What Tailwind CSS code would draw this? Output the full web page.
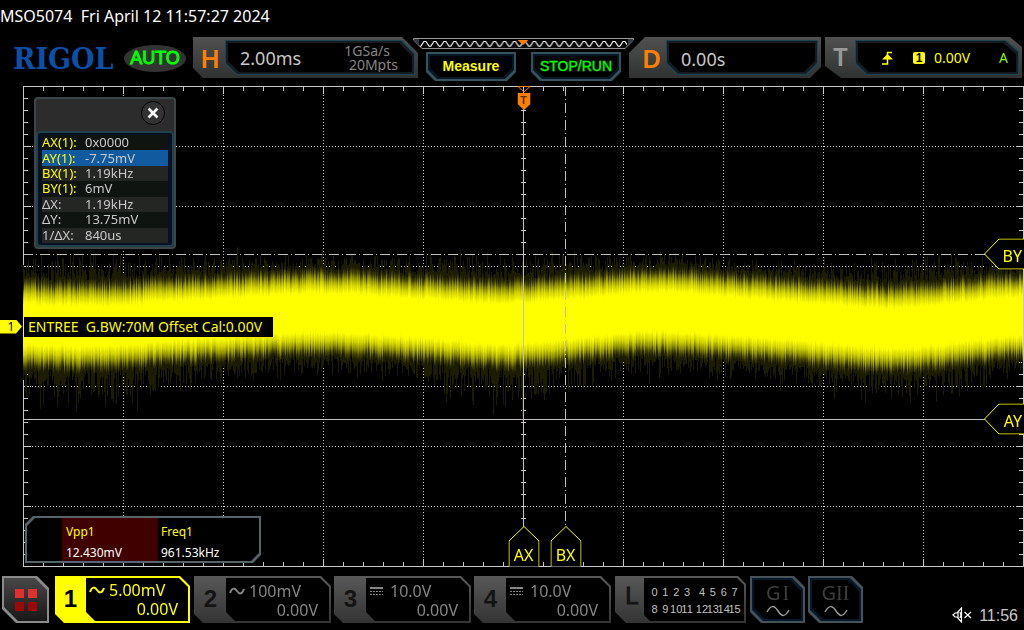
<!DOCTYPE html>
<html lang="en">
<head>
<meta charset="utf-8">
<meta name="viewport" content="width=device-width, initial-scale=1">
<title>MSO5074</title>
<script src="https://cdn.jsdelivr.net/npm/@tailwindcss/browser@4"></script>
</head>
<body class="flex h-screen flex-col overflow-hidden bg-black font-['Noto_Sans','Open_Sans',sans-serif] text-[#c8c8c8]">

<h1 class="h-8 shrink-0 text-base leading-8 whitespace-pre text-white">MSO5074  Fri April 12 11:57:27 2024</h1>

<header class="mt-[5px] grid h-[41px] shrink-0 grid-cols-[193px_225fr_211fr_192fr_4px_197fr] grid-rows-[41px] pr-[2px]">
  <div class="flex items-center gap-3 pt-[2px] pl-[13px]">
    <span class="w-[99px] font-['DejaVu_Serif_Condensed','DejaVu_Serif',serif] text-[30px] leading-none font-bold text-[#0a50a8]">RIGOL</span>
    <span class="h-[27px] w-[62px] shrink-0 rounded-[50%] bg-[#333] text-center font-['Liberation_Sans',sans-serif] text-lg leading-[27px] text-[#00ff00] [-webkit-text-stroke:1px_#00ff00]">AUTO</span>
  </div>

  <!-- Horizontal timebase -->
  <section class="flex bg-linear-to-b from-[#505050] to-[#303232] [clip-path:polygon(0_0,calc(100%-16px)_0,100%_16px,100%_100%,10px_100%,0_calc(100%-10px))]">
    <h2 class="w-8 shrink-0 pt-[2px] pl-[2px] text-center text-[26px] leading-[38px] font-semibold text-[#ff8000]">H</h2>
    <div class="my-[3px] mr-[3px] flex-1 bg-[#1f4452] p-px [clip-path:polygon(0_0,calc(100%-13px)_0,100%_13px,100%_100%,11px_100%,0_calc(100%-11px))]">
      <div class="h-full bg-[#151c22] p-[2px] [clip-path:inherit]">
        <div class="flex h-full items-center bg-black pr-[14px] pl-3 [clip-path:inherit]">
          <span class="text-lg">2.00ms</span>
          <span class="ml-auto text-right text-sm leading-[14px] text-[#858585]"><span class="mr-2">1GSa/s</span><br>20Mpts</span>
        </div>
      </div>
    </div>
  </section>

  <!-- Memory bar and run control -->
  <section class="flex flex-col">
    <div class="-mx-[5px] h-3">
      <svg class="h-full w-full" viewBox="0 0 222 12" preserveAspectRatio="none">
        <defs><pattern id="zig" width="10" height="12" patternUnits="userSpaceOnUse" x="7"><path d="M0 9.500 L1 9 L4 4.500 L6 4.500 L9 9 L10 9.500" fill="none" stroke="#fff" stroke-width="1.200"/></pattern></defs>
        <path d="M.5 1.500H221.500V3L213 11.500H9L.5 3Z" fill="#000" stroke="#999"/>
        <path d="M1 2H6V8L1 3ZM221 2H216V8L221 3Z" fill="#333a40"/>
        <rect x="7" y="0" width="208" height="12" fill="url(#zig)"/>
        <path d="M105 3H116L110.500 8Z" fill="#ff8000"/>
      </svg>
    </div>
    <div class="mt-[3px] flex justify-between px-2 font-['Liberation_Sans',sans-serif]">
      <button class="h-[29px] w-[90px] bg-[#35535c] p-[2px] [clip-path:polygon(0_0,100%_0,100%_calc(100%-9px),calc(100%-9px)_100%,9px_100%,0_calc(100%-9px))]"><span class="block h-full bg-[#081626] p-[2px] [clip-path:inherit]"><span class="block h-full bg-black text-sm leading-[21px] font-bold text-[#ffff00] [clip-path:inherit]">Measure</span></span></button>
      <button class="h-[29px] w-[90px] bg-[#35535c] p-[2px] [clip-path:polygon(0_0,100%_0,100%_calc(100%-9px),calc(100%-9px)_100%,9px_100%,0_calc(100%-9px))]"><span class="block h-full bg-[#081626] p-[2px] [clip-path:inherit]"><span class="flex h-full justify-center bg-black text-sm leading-[20px] whitespace-nowrap text-[#00ff00] [clip-path:inherit] [-webkit-text-stroke:0.4px_#00ff00]">STOP/RUN</span></span></button>
    </div>
  </section>

  <!-- Delay -->
  <section class="flex bg-linear-to-b from-[#505050] to-[#303232] [clip-path:polygon(16px_0,100%_0,100%_calc(100%-11px),calc(100%-11px)_100%,0_100%,0_16px)]">
    <h2 class="w-[37px] shrink-0 pt-[2px] pl-[8px] text-center text-[26px] leading-[38px] font-semibold text-[#ff8000]">D</h2>
    <div class="my-[3px] mr-[3px] flex-1 bg-[#1f4452] p-px [clip-path:polygon(0_0,100%_0,100%_calc(100%-11px),calc(100%-11px)_100%,11px_100%,0_calc(100%-11px))]">
      <div class="h-full bg-[#151c22] p-[2px] [clip-path:inherit]">
        <div class="flex h-full items-center bg-black pt-[2px] pl-3 text-lg [clip-path:inherit]">0.00s</div>
      </div>
    </div>
  </section>

  <!-- Trigger -->
  <section class="col-start-6 flex bg-linear-to-b from-[#505050] to-[#303232] [clip-path:polygon(0_0,calc(100%-12px)_0,100%_10px,100%_100%,16px_100%,0_calc(100%-12px))]">
    <h2 class="w-[30px] shrink-0 pl-[1px] text-center text-[26px] leading-[38px] font-semibold text-[#999]">T</h2>
    <div class="my-[3px] mr-[3px] flex-1 bg-[#1f4452] p-px [clip-path:polygon(0_0,calc(100%-13px)_0,100%_11px,100%_100%,11px_100%,0_calc(100%-11px))]">
      <div class="h-full bg-[#151c22] p-[2px] [clip-path:inherit]">
        <div class="flex h-full items-center bg-black pr-[8px] pl-[23px] text-sm text-[#ffff00] [clip-path:inherit]">
          <svg class="h-[14px] w-[13px]" viewBox="0 0 13 14"><path d="M1 13H6.500V1.500H11" fill="none" stroke="#ff0" stroke-width="1.500"/><path d="M1 8.500L6.500 3L12 8.500Z" fill="#ff0"/></svg>
          <span class="ml-[19px] h-3 w-3 rounded-xs bg-[#ffff00] text-center font-['Liberation_Sans',sans-serif] text-xs leading-3 font-bold text-black">1</span>
          <span class="ml-[9px]">0.00V</span>
          <span class="ml-auto text-[#8ff01c]">A</span>
        </div>
      </div>
    </div>
  </section>
</header>

<main class="relative mt-2 min-h-0 flex-1 pl-[23px]">
  <div id="plot" class="relative h-full w-full">
    <svg class="absolute inset-0 h-full w-full" viewBox="0 0 1001 481" preserveAspectRatio="none" fill="none" stroke="#c8c8c8" shape-rendering="crispEdges">
      <path d="M.5 .5H1000.500V480.500H.5Z"/>
      <g stroke-dasharray="1 2">
        <path d="M0 60.500H1001M0 120.500H1001M0 180.500H1001M0 240.500H1001M0 300.500H1001M0 360.500H1001M0 420.500H1001"/>
        <path d="M100.500 0V481M200.500 0V481M300.500 0V481M400.500 0V481M600.500 0V481M700.500 0V481M800.500 0V481M900.500 0V481"/>
      </g>
      <!-- minor and major ticks along the frame -->
      <path d="M0 2.500H1001M0 478.500H1001" stroke-width="5" stroke-dasharray="1 19"/>
      <path d="M0 4H1001M0 477H1001" stroke-width="8" stroke-dasharray="1 99"/>
      <path d="M2.500 0V481M998.500 0V481M500.500 0V481" stroke-width="5" stroke-dasharray="1 11"/>
      <path d="M4 0V481M997 0V481" stroke-width="8" stroke-dasharray="1 59"/>
    </svg>
    <canvas id="wave" width="1001" height="481" class="absolute inset-0 h-full w-full" role="img" aria-label="Channel 1 trace"></canvas>
    <svg class="absolute inset-0 h-full w-full" viewBox="0 0 1001 481" preserveAspectRatio="none" fill="none" stroke="#c0c0b8" shape-rendering="crispEdges">
      <path d="M500.500 0V442M0 333.500H962"/>
      <path d="M542.500 0V442M0 168.500H962" stroke-dasharray="10 3 1 3"/>
    </svg>

    <!-- Trigger position -->
    <div class="absolute top-0 left-[50%] -translate-x-1/2">
      <svg class="h-[25px] w-[13px]" viewBox="0 0 13 25"><path d="M.5 .5H12.500L6.500 6Z" fill="none" stroke="#ff8000"/><path d="M0 7H13V18L6.500 24L0 18Z" fill="#ff8000"/></svg>
      <span class="absolute inset-x-0 top-[8px] text-center font-['Liberation_Sans',sans-serif] text-[11px] leading-3 font-bold text-[#503000]">T</span>
    </div>

    <!-- Cursor handles -->
    <div class="absolute bottom-0 left-[50%] h-[41px] w-[31px] -translate-x-1/2 pt-[19px] text-center text-base leading-5 text-[#ffff00]">
      <svg class="absolute inset-0" width="31" height="41" viewBox="0 0 31 41"><path d="M.5 40.500V15L15.500 .5L30.500 15V40.500" fill="#000" stroke="#ff0"/></svg><span class="relative">AX</span>
    </div>
    <div class="absolute bottom-0 left-[54.200%] h-[41px] w-[31px] -translate-x-1/2 pt-[19px] text-center text-base leading-5 text-[#ffff00]">
      <svg class="absolute inset-0" width="31" height="41" viewBox="0 0 31 41"><path d="M.5 40.500V15L15.500 .5L30.500 15V40.500" fill="#000" stroke="#ff0"/></svg><span class="relative">BX</span>
    </div>
    <div class="absolute top-[35%] right-0 h-[31px] w-10 -translate-y-1/2 pr-[2px] text-right text-base leading-[34px] text-[#ffff00]">
      <svg class="absolute inset-0" width="40" height="31" viewBox="0 0 40 31"><path d="M40 .5H15L.5 15.500L15 30.500H40" fill="#000" stroke="#ff0"/></svg><span class="relative">BY</span>
    </div>
    <div class="absolute top-[69.300%] right-0 h-[31px] w-10 -translate-y-1/2 pr-[2px] text-right text-base leading-[34px] text-[#ffff00]">
      <svg class="absolute inset-0" width="40" height="31" viewBox="0 0 40 31"><path d="M40 .5H15L.5 15.500L15 30.500H40" fill="#000" stroke="#ff0"/></svg><span class="relative">AY</span>
    </div>

    <div class="absolute top-[50%] left-px min-w-[249px] -translate-y-1/2 bg-black px-1 text-sm leading-5 whitespace-pre text-[#ffff00]">ENTREE  G.BW:70M Offset Cal:0.00V</div>

    <!-- Cursor readout -->
    <section class="absolute top-[11px] left-[11px] w-[142px] rounded-[4px] border-2 border-[#3c4548] bg-[#2b2c2b]">
      <div class="flex h-8 justify-end pt-[2px] pr-[9px]">
        <button aria-label="Close" class="flex h-6 w-6 items-center justify-center rounded-full border border-black bg-[#333]"><svg class="h-3 w-3" viewBox="0 0 12 12"><path d="M1.500 1.500L10.500 10.500M10.500 1.500L1.500 10.500" stroke="#fff" stroke-width="2.500"/></svg></button>
      </div>
      <div class="rounded-[4px] border-2 border-[#23414c] bg-[#061222] px-1 py-[2px]">
        <table class="h-[108px] w-full border-collapse text-left text-[13px] leading-[15px]">
          <tbody>
            <tr class="bg-[#101411]"><th scope="row" class="w-[43px] p-0 font-normal whitespace-nowrap text-[#ffff00]">AX(1):</th><td class="p-0">0x0000</td></tr>
            <tr class="bg-[#115aa0]"><th scope="row" class="p-0 font-normal text-[#ffff00]">AY(1):</th><td class="p-0">-7.75mV</td></tr>
            <tr class="bg-[#242624]"><th scope="row" class="p-0 font-normal text-[#ffff00]">BX(1):</th><td class="p-0">1.19kHz</td></tr>
            <tr class="bg-[#101411]"><th scope="row" class="p-0 font-normal text-[#ffff00]">BY(1):</th><td class="p-0">6mV</td></tr>
            <tr class="bg-[#242624]"><th scope="row" class="p-0 font-normal">ΔX:</th><td class="p-0">1.19kHz</td></tr>
            <tr class="bg-[#101411]"><th scope="row" class="p-0 font-normal">ΔY:</th><td class="p-0">13.75mV</td></tr>
            <tr class="bg-[#242624]"><th scope="row" class="p-0 font-normal">1/ΔX:</th><td class="p-0">840us</td></tr>
          </tbody>
        </table>
      </div>
    </section>

    <!-- Measurement results -->
    <section class="absolute bottom-1 left-[2px] h-[47px] w-[236px] bg-[#56656a] p-[2px] [clip-path:polygon(8px_0,100%_0,100%_calc(100%-8px),calc(100%-8px)_100%,0_100%,0_8px)]">
      <dl class="flex h-full bg-black pl-[35px] text-xs leading-[21px] [clip-path:inherit]">
        <div class="w-24 bg-[#400000] pt-[3px] pl-1"><dt class="text-[#ffff00]">Vpp1</dt><dd class="text-white">12.430mV</dd></div>
        <div class="pt-[3px] pl-[3px]"><dt class="text-[#ffff00]">Freq1</dt><dd class="text-white">961.53kHz</dd></div>
      </dl>
    </section>
  </div>

  <!-- Channel 1 ground level -->
  <div class="absolute top-[50%] left-0 h-[14px] w-[22px] -translate-y-1/2 bg-[#ffff00] text-center text-xs leading-[14px] text-black [clip-path:polygon(0_0,16px_0,100%_50%,16px_100%,0_100%)]">1</div>
</main>

<footer class="mt-[9px] mb-[7px] grid h-[47px] shrink-0 grid-cols-[49px_137fr_137fr_137fr_137fr_133fr_55px_55px_154fr] gap-[3px] pr-1 pl-[2px]">
  <button aria-label="Menu" class="w-[47px] bg-[#8a8a8a] p-[2px] [clip-path:polygon(0_0,calc(100%-12px)_0,100%_12px,100%_100%,14px_100%,0_calc(100%-14px))]">
    <span class="flex h-full items-center justify-center bg-linear-to-b from-[#484848] to-[#181818] [clip-path:inherit]">
      <svg class="h-6 w-6" viewBox="0 0 24 24"><path d="M1 1H10V10H1ZM14 1H23V10H14Z" fill="#e03030"/><path d="M1 14H10V23H1ZM14 14H23V23H14Z" fill="#9c0808"/></svg>
    </span>
  </button>

  <button class="mr-px ml-px flex bg-[#ffff00] p-0 text-left text-base text-[#ffff00] [clip-path:polygon(0_0,calc(100%-10px)_0,100%_10px,100%_100%,9px_100%,0_calc(100%-9px))]">
    <span class="w-[31px] text-center font-['Liberation_Sans',sans-serif] text-2xl leading-[46px] font-bold text-black">1</span>
    <span class="mt-[2px] mr-[2px] mb-[2px] flex h-[43px] flex-1 flex-col justify-center bg-black pt-px leading-[19px] [clip-path:polygon(0_0,calc(100%-9px)_0,100%_9px,100%_100%,9px_100%,0_calc(100%-9px))]">
      <span class="flex items-center"><svg class="mr-1 mb-px ml-[3px] h-2 w-4" viewBox="0 0 16 8"><path d="M1 6C3 0 6 1 8 4S13 8 15 2" fill="none" stroke="currentColor" stroke-width="2"/></svg>5.00mV</span>
      <span class="pr-[10px] text-right">0.00V</span>
    </span>
  </button>

  <button class="flex bg-linear-to-b from-[#585858] to-[#343434] p-px text-left text-base text-[#858585] [clip-path:polygon(0_0,calc(100%-10px)_0,100%_10px,100%_100%,9px_100%,0_calc(100%-9px))]">
    <span class="w-[31px] text-center font-['Liberation_Sans',sans-serif] text-2xl leading-[44px] font-bold text-[#141414]">2</span>
    <span class="mt-px mr-px flex h-[43px] flex-1 flex-col justify-center bg-black pt-[2px] leading-[19px] [clip-path:polygon(0_0,calc(100%-9px)_0,100%_9px,100%_100%,9px_100%,0_calc(100%-9px))]">
      <span class="flex items-center"><svg class="mr-1 mb-px ml-[3px] h-2 w-4" viewBox="0 0 16 8"><path d="M1 6C3 0 6 1 8 4S13 8 15 2" fill="none" stroke="currentColor" stroke-width="2"/></svg>100mV</span>
      <span class="pr-[11px] text-right">0.00V</span>
    </span>
  </button>

  <button class="flex bg-linear-to-b from-[#585858] to-[#343434] p-px text-left text-base text-[#858585] [clip-path:polygon(0_0,calc(100%-10px)_0,100%_10px,100%_100%,9px_100%,0_calc(100%-9px))]">
    <span class="w-[31px] text-center font-['Liberation_Sans',sans-serif] text-2xl leading-[44px] font-bold text-[#141414]">3</span>
    <span class="mt-px mr-px flex h-[43px] flex-1 flex-col justify-center bg-black pt-[2px] leading-[19px] [clip-path:polygon(0_0,calc(100%-9px)_0,100%_9px,100%_100%,9px_100%,0_calc(100%-9px))]">
      <span class="flex items-center"><svg class="mr-[7px] ml-1 h-2 w-[13px]" viewBox="0 0 13 8" shape-rendering="crispEdges"><path d="M0 1H13" stroke="currentColor" stroke-width="2"/><path d="M0 4.500H13M0 7.500H13" stroke="currentColor" stroke-dasharray="2 1"/></svg>10.0V</span>
      <span class="pr-[11px] text-right">0.00V</span>
    </span>
  </button>

  <button class="flex bg-linear-to-b from-[#585858] to-[#343434] p-px text-left text-base text-[#858585] [clip-path:polygon(0_0,calc(100%-10px)_0,100%_10px,100%_100%,9px_100%,0_calc(100%-9px))]">
    <span class="w-[31px] text-center font-['Liberation_Sans',sans-serif] text-2xl leading-[44px] font-bold text-[#141414]">4</span>
    <span class="mt-px mr-px flex h-[43px] flex-1 flex-col justify-center bg-black pt-[2px] leading-[19px] [clip-path:polygon(0_0,calc(100%-9px)_0,100%_9px,100%_100%,9px_100%,0_calc(100%-9px))]">
      <span class="flex items-center"><svg class="mr-[7px] ml-1 h-2 w-[13px]" viewBox="0 0 13 8" shape-rendering="crispEdges"><path d="M0 1H13" stroke="currentColor" stroke-width="2"/><path d="M0 4.500H13M0 7.500H13" stroke="currentColor" stroke-dasharray="2 1"/></svg>10.0V</span>
      <span class="pr-[11px] text-right">0.00V</span>
    </span>
  </button>

  <!-- Logic analyser channels -->
  <button class="mr-px ml-px flex bg-linear-to-b from-[#585858] to-[#343434] p-px font-['Liberation_Sans',sans-serif] [clip-path:polygon(0_0,calc(100%-8px)_0,100%_8px,100%_100%,11px_100%,0_calc(100%-11px))]">
    <span class="w-[28px] pl-1 text-center text-2xl leading-[38px] text-[#141414] [-webkit-text-stroke:1px_#141414]">L</span>
    <span class="mt-px mr-px flex h-[43px] flex-1 flex-col justify-center gap-px bg-black pt-px pr-[4px] pl-[5px] text-[11px] leading-4 text-[#c0c0c0] [clip-path:polygon(0_0,calc(100%-7px)_0,100%_7px,100%_100%,6px_100%,0_calc(100%-6px))]">
      <span class="flex"><span class="grid flex-1 grid-cols-4"><i class="not-italic">0</i><i class="not-italic">1</i><i class="not-italic">2</i><i class="not-italic">3</i></span><span class="ml-1 grid flex-1 grid-cols-4"><i class="not-italic">4</i><i class="not-italic">5</i><i class="not-italic">6</i><i class="not-italic">7</i></span></span>
      <span class="flex"><span class="grid flex-1 grid-cols-4"><i class="not-italic">8</i><i class="not-italic">9</i><i class="flex justify-center not-italic">10</i><i class="flex justify-center not-italic">11</i></span><span class="ml-1 grid flex-1 grid-cols-4"><i class="flex justify-center not-italic">12</i><i class="flex justify-center not-italic">13</i><i class="flex justify-center not-italic">14</i><i class="flex justify-center not-italic">15</i></span></span>
    </span>
  </button>

  <button class="bg-[#465258] p-[2px] [clip-path:polygon(0_0,calc(100%-11px)_0,100%_11px,100%_100%,11px_100%,0_calc(100%-11px))]">
    <span class="block h-full bg-[#06182c] p-[2px] [clip-path:inherit]"><span class="flex h-full flex-col items-center bg-black pt-px text-[#3e3e3e] [clip-path:inherit]"><span class="text-xl leading-6">G<span class="pl-[2px] font-['Liberation_Serif',serif]">I</span></span><svg class="h-3 w-6" viewBox="0 0 24 12"><path d="M1 7C5 0 8 0 12 6S19 12 23 5" fill="none" stroke="#999" stroke-width="1.500"/></svg></span></span>
  </button>
  <button class="bg-[#465258] p-[2px] [clip-path:polygon(0_0,calc(100%-11px)_0,100%_11px,100%_100%,11px_100%,0_calc(100%-11px))]">
    <span class="block h-full bg-[#06182c] p-[2px] [clip-path:inherit]"><span class="flex h-full flex-col items-center bg-black pt-px text-[#3e3e3e] [clip-path:inherit]"><span class="text-xl leading-6">G<span class="font-['Liberation_Serif',serif]">II</span></span><svg class="h-3 w-6" viewBox="0 0 24 12"><path d="M1 7C5 0 8 0 12 6S19 12 23 5" fill="none" stroke="#999" stroke-width="1.500"/></svg></span></span>
  </button>

  <div class="flex items-end justify-end gap-[7px] pr-[2px] font-['Liberation_Sans',sans-serif] text-base leading-[15px]">
    <svg class="h-4 w-5" viewBox="0 0 20 16" fill="none" stroke="#fff" stroke-width="1.200"><path d="M1 8L3 6H5L9.500 1V15L5 10H3Z"/><path d="M6 5V11M8 5L9 8L8 11M12.500 5L19 11M19 5L12.500 11"/></svg>
    <time>11:56</time>
  </div>
</footer>

<script>
  // Noise band of channel 1, drawn one column at a time.
  const canvas = document.getElementById('wave');
  const ctx = canvas.getContext('2d');
  let seed = 7;
  const rnd = () => (seed = (seed * 16807) % 2147483647) / 2147483647;
  const mids = [[0, 238], [67, 240], [177, 233], [297, 227], [397, 232], [480, 238], [547, 233], [627, 226], [717, 231], [807, 238], [880, 242], [937, 236], [1001, 230]];
  const mid = x => {
    let i = 0;
    while (i < mids.length - 2 && x > mids[i + 1][0]) i++;
    const [x0, y0] = mids[i], [x1, y1] = mids[i + 1];
    const p = mids[Math.max(i - 1, 0)][1], n = mids[Math.min(i + 2, mids.length - 1)][1];
    const t = (x - x0) / (x1 - x0);
    return 0.5 * (2 * y0 + (y1 - p) * t + (2 * p - 5 * y0 + 4 * y1 - n) * t * t + (3 * y0 - p - 3 * y1 + n) * t * t * t);
  };
  const bump = (x, c, w) => Math.exp(-(((x - c) / w) ** 2));
  for (let x = 0; x < 1000; x++) {
    const m = mid(x);
    const burst = 0.5 + 0.6 * bump(x, 70, 90) + 0.65 * bump(x, 485, 75) + 0.4 * bump(x, 890, 80);
    for (const dir of [-1, 1]) {
      const edge = 38 + rnd() * 8 + burst * 3;
      const reach = edge + 2 + burst * (dir < 0 ? 24 : 32) * rnd() ** 2 + (rnd() < 0.05 ? 14 * rnd() : 0);
      ctx.fillStyle = '#1c1c00';
      if (dir < 0) ctx.fillRect(x, Math.round(m - reach), 1, Math.round(reach));
      else ctx.fillRect(x, Math.round(m), 1, Math.round(reach));
      const g = ctx.createLinearGradient(0, m, 0, m + dir * edge);
      const j = rnd() * 0.07;
      g.addColorStop(0, '#ffff00');
      g.addColorStop(0.42 + j, '#ffff00');
      g.addColorStop(0.6 + j, '#d2d200');
      g.addColorStop(0.75 + j, '#8c8c00');
      g.addColorStop(0.86 + j, '#464600');
      g.addColorStop(1, '#1c1c00');
      ctx.fillStyle = g;
      if (dir < 0) ctx.fillRect(x, Math.round(m - edge), 1, Math.round(edge) + 1);
      else ctx.fillRect(x, Math.round(m), 1, Math.round(edge));
    }
  }
</script>
</body>
</html>
